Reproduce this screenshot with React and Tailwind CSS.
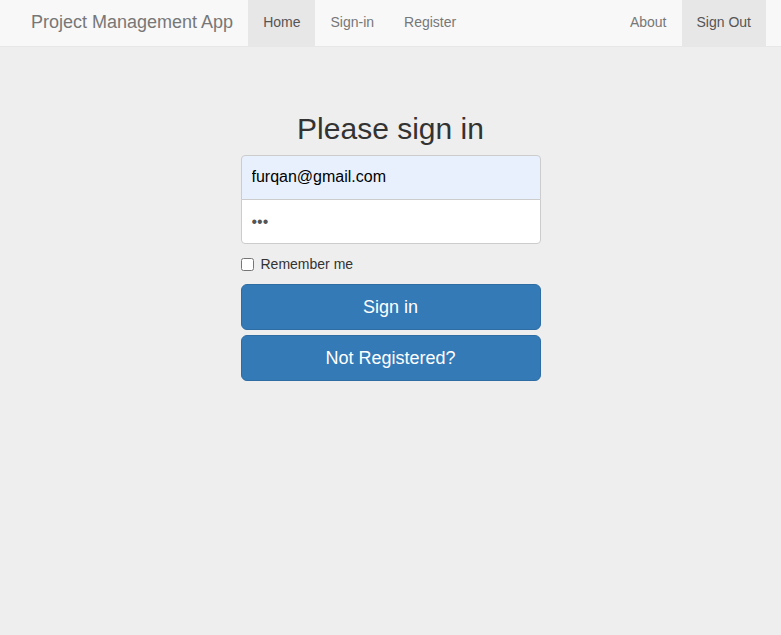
import { useState } from 'react';

const NavItem = ({ label, active }) => (
    <a
        href="#"
        className={`${active ? 'bg-[#e7e7e7] text-[#555]' : 'text-[#777]'} block px-[15px] h-[46px] leading-[44px] text-[14px]`}
    >
        {label}
    </a>
);

const App = () => {
    const [email, setEmail] = useState('furqan@gmail.com');
    const [password, setPassword] = useState('abc');
    const [remember, setRemember] = useState(false);

    return (
        <div className="min-h-[635px] bg-[#eeeeee] font-['Liberation_Sans',Arial,sans-serif] text-[#333]">
            {/* Navbar */}
            <nav className="bg-[#f8f8f8] border-b border-[#e7e7e7] h-[47px]">
                <div className="flex items-start justify-between px-[15px]">
                    <div className="flex">
                        <a href="#" className="block pl-[16px] pr-[15px] h-[46px] leading-[44px] text-[18px] text-[#777]">
                            Project Management App
                        </a>
                        <NavItem label="Home" active />
                        <NavItem label="Sign-in" />
                        <NavItem label="Register" />
                    </div>
                    <div className="flex">
                        <NavItem label="About" />
                        <NavItem label="Sign Out" active />
                    </div>
                </div>
            </nav>

            {/* Sign in form */}
            <div className="flex justify-center pt-[65px]">
                <form className="w-[300px]" onSubmit={(e) => e.preventDefault()}>
                    <h2 className="text-center text-[30px] leading-[33px] mb-[10px] text-[#333]">Please sign in</h2>
                    <input
                        type="email"
                        value={email}
                        onChange={(e) => setEmail(e.target.value)}
                        className="block w-full h-[45px] px-[10px] pb-[2px] text-[16px] text-black bg-[#e8f0fe] border border-[#ccc] rounded-t-[4px] outline-none"
                    />
                    <input
                        type="password"
                        value={password}
                        onChange={(e) => setPassword(e.target.value)}
                        className="block w-full h-[45px] -mt-px px-[10px] text-[16px] text-[#555] bg-white border border-[#ccc] rounded-b-[4px] outline-none"
                    />
                    <label className="flex items-center mt-[10px] h-[20px] text-[14px] text-[#333]">
                        <input
                            type="checkbox"
                            checked={remember}
                            onChange={(e) => setRemember(e.target.checked)}
                            className="w-[13px] h-[13px] m-0 mr-[7px]"
                        />
                        Remember me
                    </label>
                    <button
                        type="submit"
                        className="block w-full mt-[10px] h-[46px] text-[18px] text-white bg-[#337ab7] border border-[#2e6da4] rounded-[6px]"
                    >
                        Sign in
                    </button>
                    <button
                        type="button"
                        className="block w-full mt-[5px] h-[46px] text-[18px] text-white bg-[#337ab7] border border-[#2e6da4] rounded-[6px]"
                    >
                        Not Registered?
                    </button>
                </form>
            </div>
        </div>
    );
};

export default App;
